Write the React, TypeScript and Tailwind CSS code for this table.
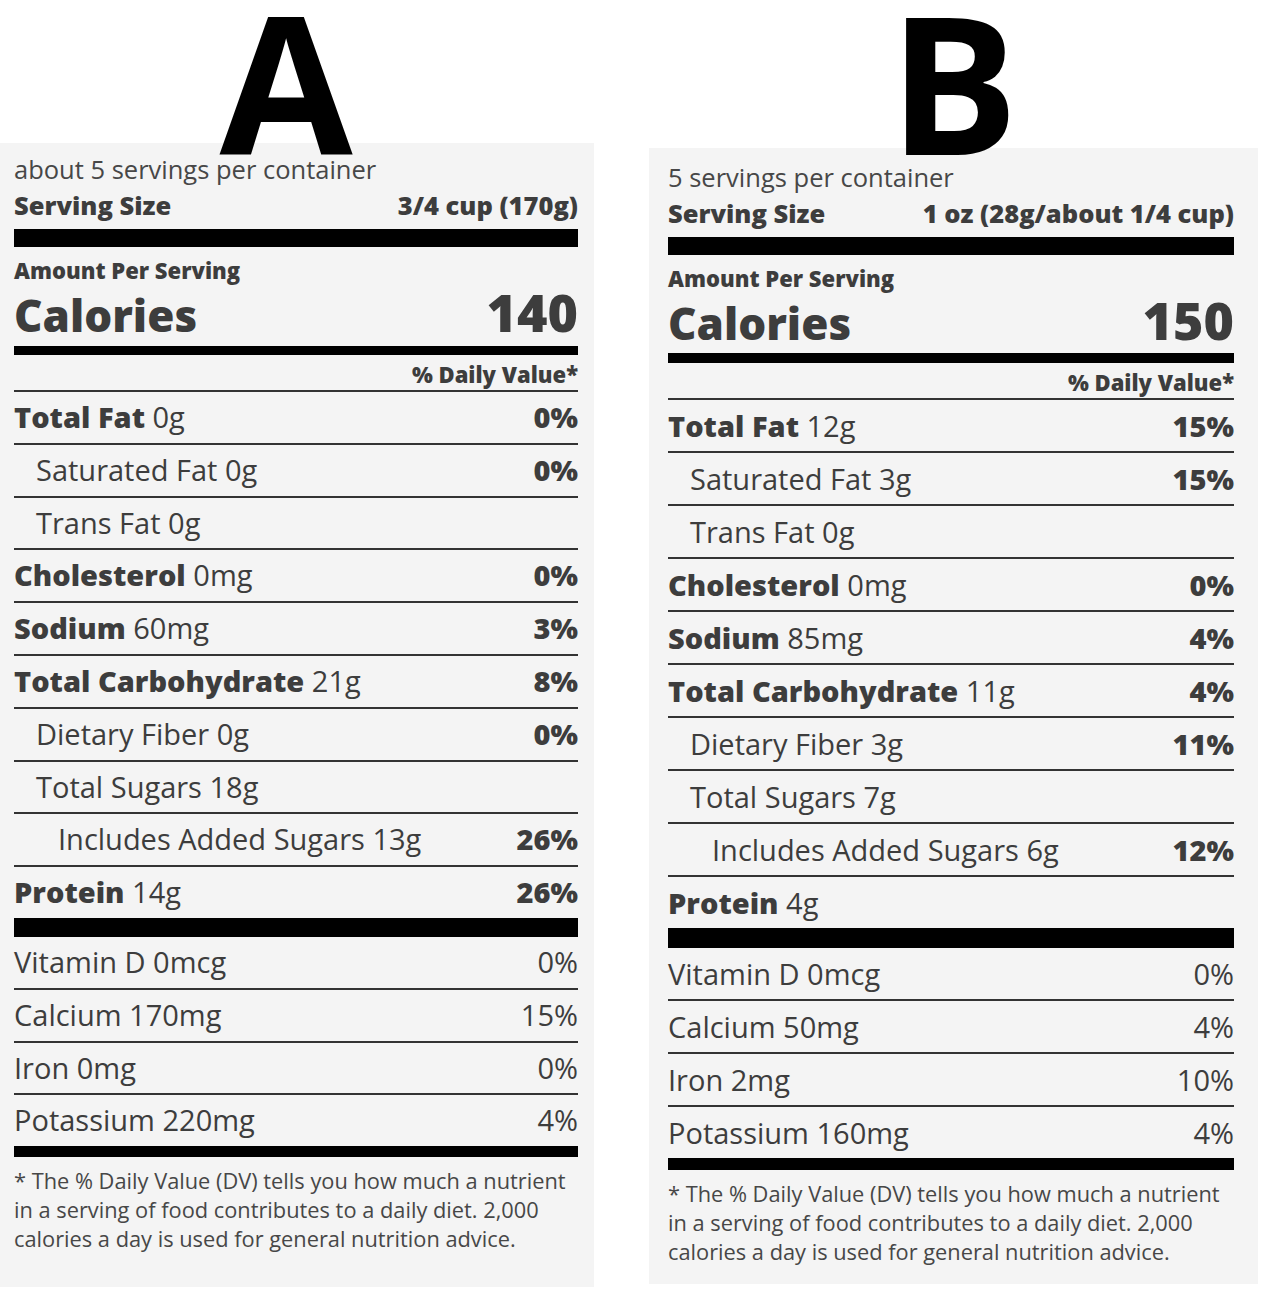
import React from "react";

type Row = {
  bold?: string;
  name?: string;
  amount: string;
  dv?: string;
  indent?: 0 | 1 | 2;
};

type LabelData = {
  letter: string;
  servings: string;
  servingSize: string;
  calories: string;
  rows: Row[];
  vitamins: { name: string; dv: string }[];
};

const dataA: LabelData = {
  letter: "A",
  servings: "about 5 servings per container",
  servingSize: "3/4 cup (170g)",
  calories: "140",
  rows: [
    { bold: "Total Fat", amount: "0g", dv: "0%" },
    { name: "Saturated Fat", amount: "0g", dv: "0%", indent: 1 },
    { name: "Trans Fat", amount: "0g", indent: 1 },
    { bold: "Cholesterol", amount: "0mg", dv: "0%" },
    { bold: "Sodium", amount: "60mg", dv: "3%" },
    { bold: "Total Carbohydrate", amount: "21g", dv: "8%" },
    { name: "Dietary Fiber", amount: "0g", dv: "0%", indent: 1 },
    { name: "Total Sugars", amount: "18g", indent: 1 },
    { name: "Includes Added Sugars", amount: "13g", dv: "26%", indent: 2 },
    { bold: "Protein", amount: "14g", dv: "26%" },
  ],
  vitamins: [
    { name: "Vitamin D 0mcg", dv: "0%" },
    { name: "Calcium 170mg", dv: "15%" },
    { name: "Iron 0mg", dv: "0%" },
    { name: "Potassium 220mg", dv: "4%" },
  ],
};

const dataB: LabelData = {
  letter: "B",
  servings: "5 servings per container",
  servingSize: "1 oz (28g/about 1/4 cup)",
  calories: "150",
  rows: [
    { bold: "Total Fat", amount: "12g", dv: "15%" },
    { name: "Saturated Fat", amount: "3g", dv: "15%", indent: 1 },
    { name: "Trans Fat", amount: "0g", indent: 1 },
    { bold: "Cholesterol", amount: "0mg", dv: "0%" },
    { bold: "Sodium", amount: "85mg", dv: "4%" },
    { bold: "Total Carbohydrate", amount: "11g", dv: "4%" },
    { name: "Dietary Fiber", amount: "3g", dv: "11%", indent: 1 },
    { name: "Total Sugars", amount: "7g", indent: 1 },
    { name: "Includes Added Sugars", amount: "6g", dv: "12%", indent: 2 },
    { bold: "Protein", amount: "4g" },
  ],
  vitamins: [
    { name: "Vitamin D 0mcg", dv: "0%" },
    { name: "Calcium 50mg", dv: "4%" },
    { name: "Iron 2mg", dv: "10%" },
    { name: "Potassium 160mg", dv: "4%" },
  ],
};

function Label({ d, variant }: { d: LabelData; variant: "A" | "B" }) {
  const isA = variant === "A";
  const rowLined = isA
    ? "h-[52.8px] leading-[50.8px] border-b-2 border-[#333]"
    : "h-[53px] leading-[51px] border-b-2 border-[#333]";
  const rowLast = isA ? "h-[50.8px] leading-[50.8px]" : "h-[51px] leading-[51px]";
  return (
    <div className={isA ? "w-[594px] shrink-0" : "w-[609px] shrink-0"}>
      <div className={isA ? "h-[143px] pr-[22px] text-center" : "h-[148px] text-center"}>
        <div className="text-[193px] leading-[162px] font-bold text-black">{d.letter}</div>
      </div>
      <div
        className={
          isA
            ? "bg-[#f4f4f4] pt-[8px] pl-[14px] pr-[16px] pb-[34px] text-[#3d3d3d]"
            : "bg-[#f4f4f4] pt-[11px] pl-[19px] pr-[24px] pb-[18px] text-[#3d3d3d]"
        }
      >
        <div className="text-[25.5px] leading-[36px] text-[#474747]">{d.servings}</div>
        <div className="flex justify-between text-[25.5px] leading-[36px] font-extrabold">
          <span>Serving Size</span>
          <span>{d.servingSize}</span>
        </div>
        <div className="mt-[6px] h-[18px] bg-black" />
        <div className="mt-[9px] text-[22px] leading-[28px] font-extrabold">Amount Per Serving</div>
        <div
          className={
            isA
              ? "flex justify-between items-baseline h-[56px] leading-[56px] font-extrabold"
              : "flex justify-between items-baseline h-[55px] leading-[55px] font-extrabold"
          }
        >
          <span className="text-[44px]">Calories</span>
          <span className="text-[52px]">{d.calories}</span>
        </div>
        <div className={isA ? "mt-[6px] h-[9px] bg-black" : "mt-[6px] h-[10px] bg-black"} />
        <div className="mt-[3px] text-right text-[22px] leading-[32px] font-extrabold border-b-2 border-[#333]">
          % Daily Value*
        </div>
        {d.rows.map((r, i) => {
          const last = i === d.rows.length - 1;
          const indent =
            r.indent === 2 ? "pl-[44px]" : r.indent === 1 ? "pl-[22px]" : "pl-0";
          return (
            <div
              key={i}
              className={`flex justify-between text-[29px] ${last ? rowLast : rowLined}`}
            >
              <span className={indent}>
                {r.bold ? <span className="font-extrabold">{r.bold}</span> : r.name} {r.amount}
              </span>
              <span className="font-extrabold">{r.dv ?? ""}</span>
            </div>
          );
        })}
        <div className={isA ? "h-[19px] bg-black" : "h-[20px] bg-black"} />
        {d.vitamins.map((v, i) => {
          const last = i === d.vitamins.length - 1;
          return (
            <div
              key={i}
              className={`flex justify-between text-[29px] ${last ? rowLast : rowLined}`}
            >
              <span>{v.name}</span>
              <span>{v.dv}</span>
            </div>
          );
        })}
        <div className={isA ? "h-[11px] bg-black" : "h-[12px] bg-black"} />
        <div className="mt-[9px] text-[21.8px] leading-[29px] text-[#474747]">
          <div>* The % Daily Value (DV) tells you how much a nutrient</div>
          <div>in a serving of food contributes to a daily diet. 2,000</div>
          <div>calories a day is used for general nutrition advice.</div>
        </div>
      </div>
    </div>
  );
}

export default function App() {
  return (
    <div
      className="w-[1268px] min-h-[1294px] bg-white flex items-start gap-[55px]"
      style={{ fontFamily: '"Open Sans", "Noto Sans", sans-serif' }}
    >
      <Label d={dataA} variant="A" />
      <Label d={dataB} variant="B" />
    </div>
  );
}
